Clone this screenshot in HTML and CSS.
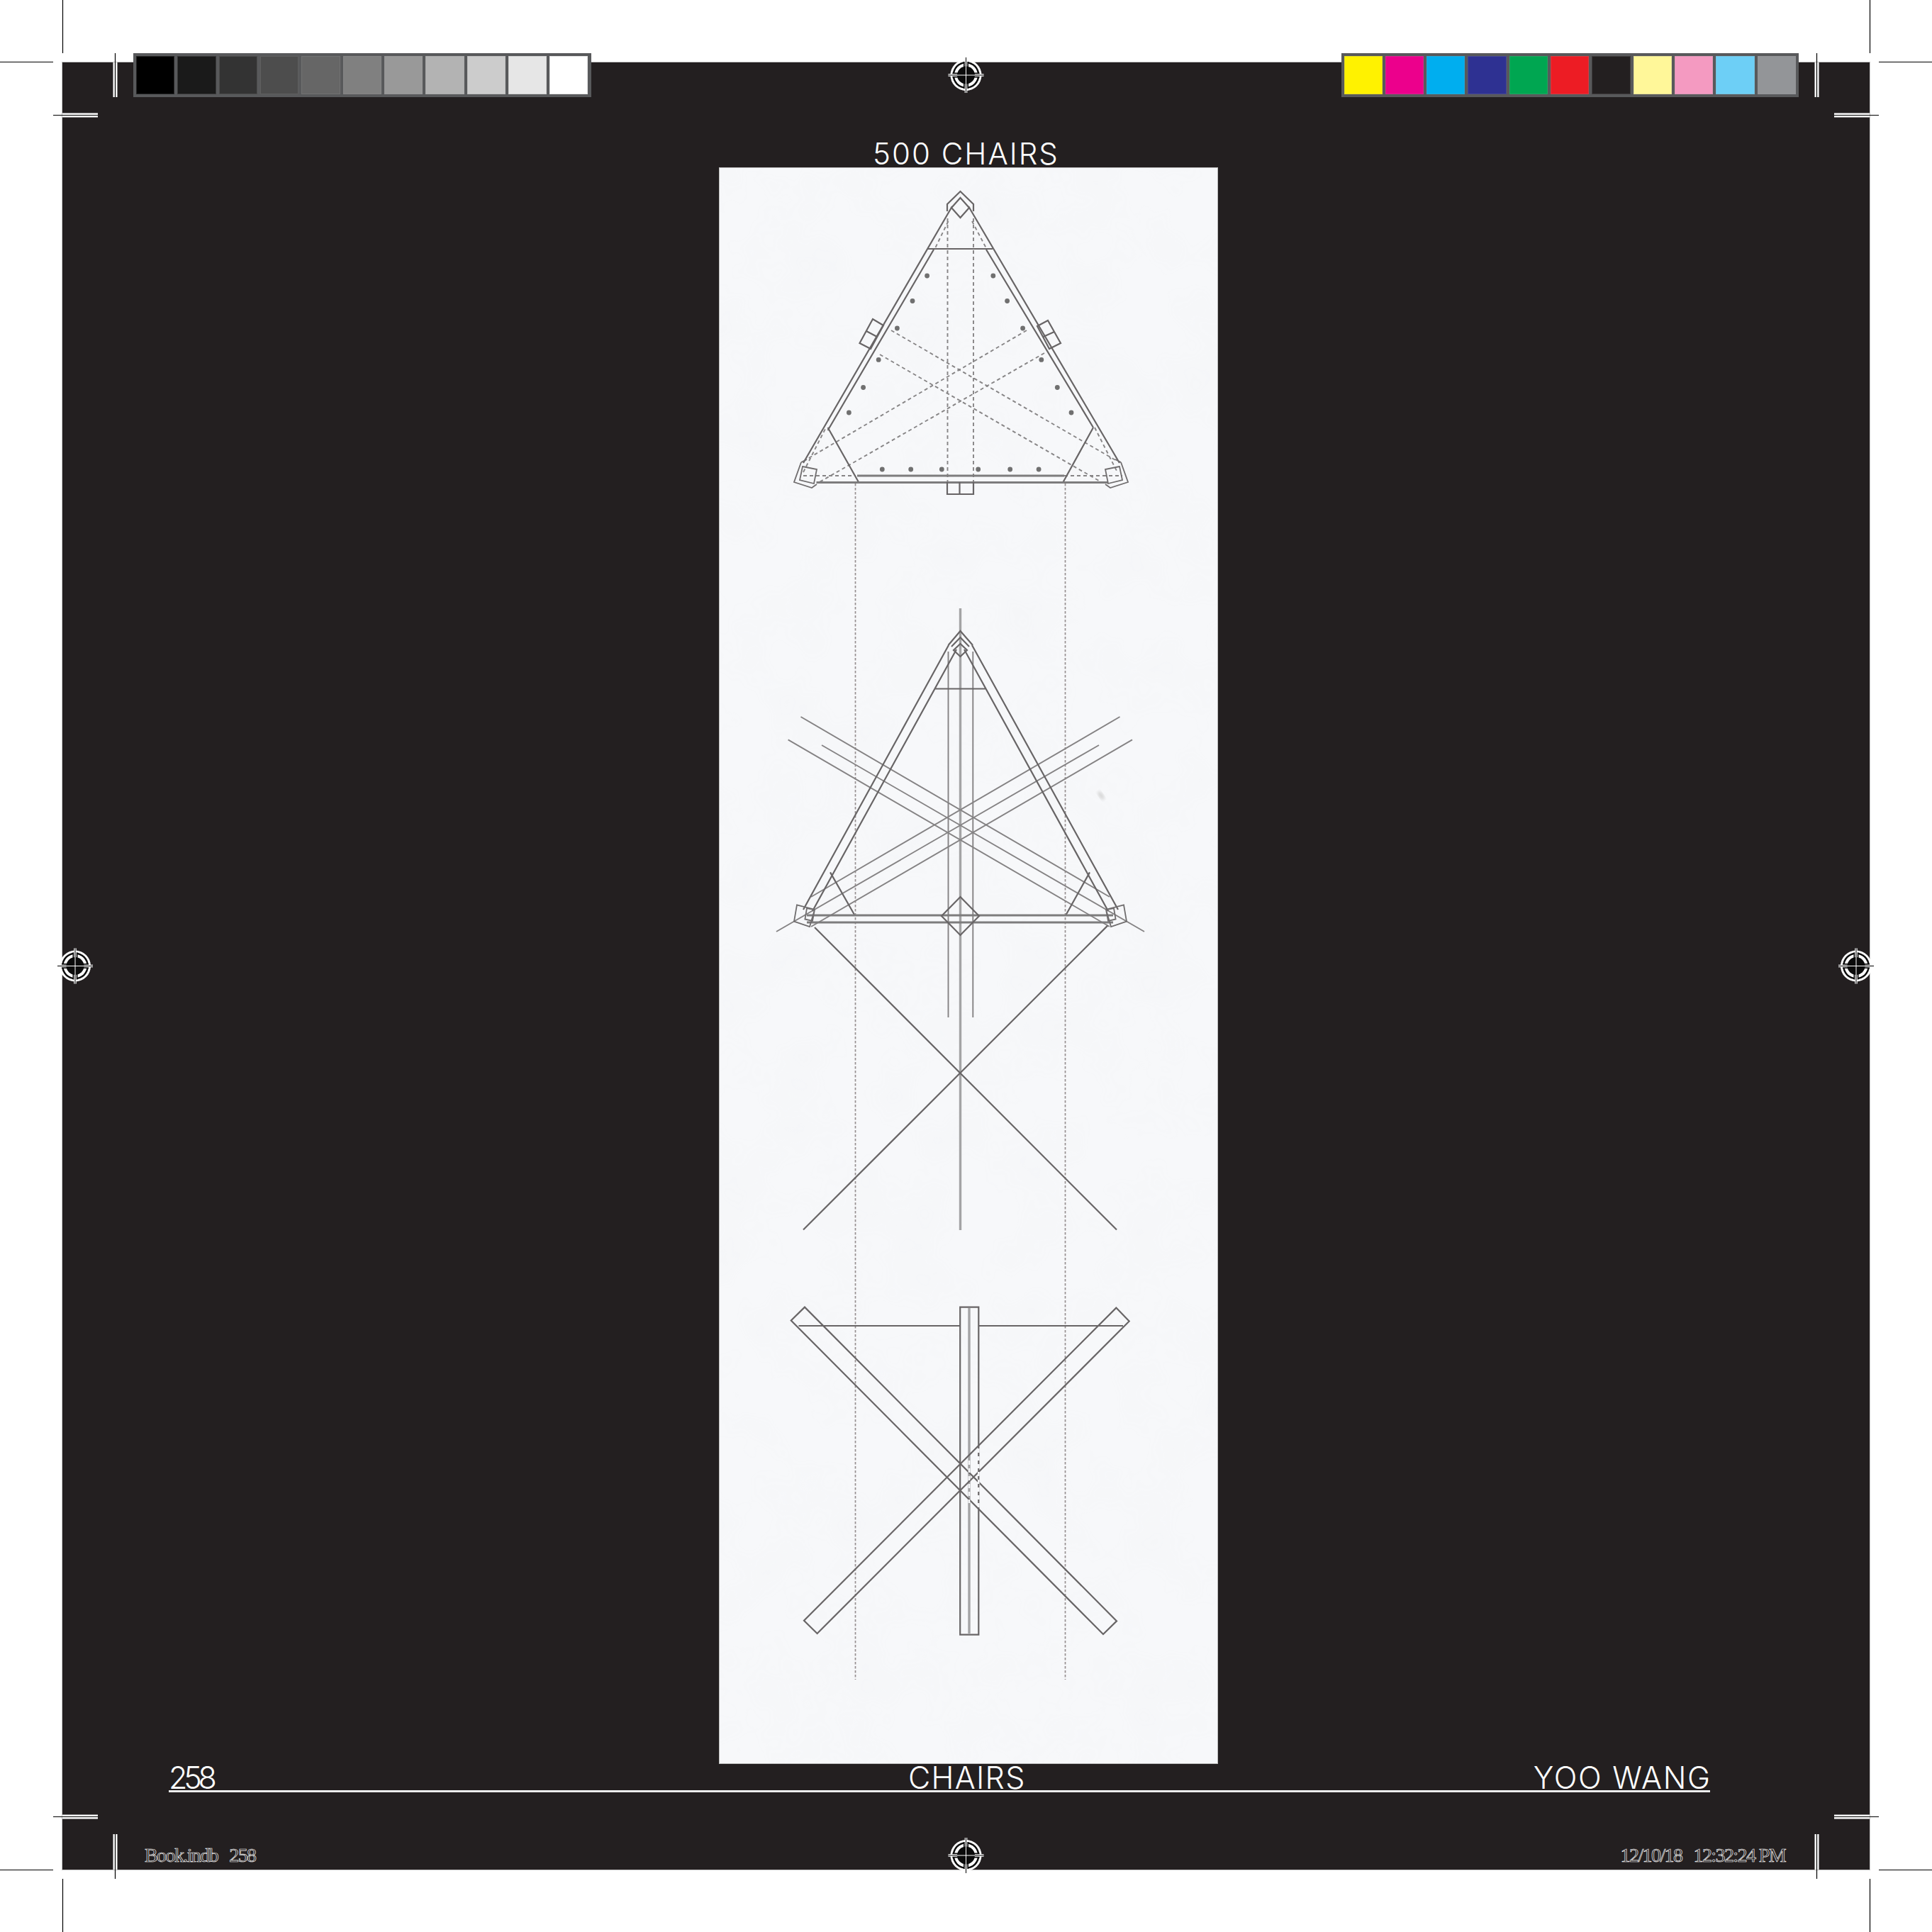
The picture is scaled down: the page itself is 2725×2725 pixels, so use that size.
FILE: index.html
```html
<!DOCTYPE html>
<html lang="en">
<head>
<meta charset="utf-8">
<title>500 Chairs – page 258</title>
<link rel="stylesheet" href="styles.css">
</head>
<body>
<div class="sheet">
  <main class="page">
    <div class="bars">
      <div class="bar">
        <i class="sw g0"></i><i class="sw g1"></i><i class="sw g2"></i><i class="sw g3"></i><i class="sw g4"></i><i class="sw g5"></i><i class="sw g6"></i><i class="sw g7"></i><i class="sw g8"></i><i class="sw g9"></i><i class="sw g10"></i>
      </div>
      <div class="bar">
        <i class="sw c0"></i><i class="sw c1"></i><i class="sw c2"></i><i class="sw c3"></i><i class="sw c4"></i><i class="sw c5"></i><i class="sw c6"></i><i class="sw c7"></i><i class="sw c8"></i><i class="sw c9"></i><i class="sw c10"></i>
      </div>
    </div>
    <h1 class="title">500 CHAIRS</h1>
    <figure class="plate">
      <svg class="drawing" viewBox="1015 237 702 2250" xmlns="http://www.w3.org/2000/svg">
        <defs>
          <filter id="paper" x="0" y="0" width="100%" height="100%">
            <feTurbulence type="fractalNoise" baseFrequency="0.012" numOctaves="3" seed="7"/>
            <feColorMatrix type="matrix" values="0 0 0 0 0.55  0 0 0 0 0.56  0 0 0 0 0.6  0.5 0 0 0 -0.2"/>
          </filter>
          <filter id="scan"><feGaussianBlur stdDeviation="0.45"/></filter>
          <filter id="spot"><feGaussianBlur stdDeviation="2"/></filter>
        </defs>
        <rect class="paper" x="1015" y="237" width="702" height="2250"/>
        <rect class="grain" x="1015" y="237" width="702" height="2250" filter="url(#paper)"/>
        <ellipse class="speck" cx="1553" cy="1122" rx="3" ry="7" transform="rotate(-35 1553 1122)" filter="url(#spot)"/>

        <g filter="url(#scan)">
          <!-- long construction lines -->
          <path class="dash-long" d="M1206.5 682V2369M1502.5 682V2369"/>

          <!-- top view -->
          <g>
            <path class="dash" d="M1336.5 308V680M1373 308V680M1337.5 312L1319 350M1371 312L1391 350M1257 466L1575 650M1241 500L1555 681M1448 466L1134 650M1473 498L1154 681M1133 671H1207M1501 671H1583M1133 666L1165 603M1544 603L1576 666"/>
            <path class="ln" d="M1336 298V288L1354.5 270L1373 288V298M1354.5 279L1367 293L1354.5 307L1342 293Z"/>
            <path class="ln" d="M1343 291L1133 653M1366 291L1579 653M1317 352L1167.6 607M1391 352L1542 603M1167.6 603L1211 680M1542 603L1499.5 680M1308.5 351H1400"/>
            <path class="ln-heavy" d="M1209 671H1501M1151.5 680.5H1562"/>
            <path class="ln" d="M1336 680V697H1373V680M1353.5 680V697"/>
            <path class="ln" d="M1231 450L1212.5 484L1228 492L1246 459ZM1222 467L1237 475M1478 452L1496 484L1480 492L1463 460ZM1487 468L1471.500 475"/>
            <path class="ln-thin" d="M1130 652L1120 680L1145 688L1152 683M1130 652L1138 648M1132 658L1152 662L1148 682L1128 677ZM1581 652L1591 680L1566 688L1559 683M1581 652L1573 648M1579 658L1559 662L1563 682L1583 677Z"/>
            <g class="dots">
              <circle cx="1307.6" cy="389" r="3.4"/><circle cx="1287" cy="424.5" r="3.4"/><circle cx="1265.4" cy="463" r="3.4"/><circle cx="1239.2" cy="507.4" r="3.4"/><circle cx="1217.6" cy="546.5" r="3.4"/><circle cx="1197.4" cy="582" r="3.4"/>
              <circle cx="1400.8" cy="389" r="3.4"/><circle cx="1420.6" cy="424.5" r="3.4"/><circle cx="1442.6" cy="463" r="3.4"/><circle cx="1468.8" cy="507.4" r="3.4"/><circle cx="1491.3" cy="546.5" r="3.4"/><circle cx="1511" cy="582" r="3.4"/>
              <circle cx="1244.3" cy="662" r="3.4"/><circle cx="1284.7" cy="662" r="3.4"/><circle cx="1328.3" cy="662" r="3.4"/><circle cx="1379.7" cy="662" r="3.4"/><circle cx="1424.7" cy="662" r="3.4"/><circle cx="1465.1" cy="662" r="3.4"/>
            </g>
          </g>

          <!-- front view -->
          <g>
            <path class="ln-center" d="M1354.5 858V1735"/>
            <path class="ln-soft" d="M1337.5 919V1435M1372.3 919V1435"/>
            <path class="ln-soft" d="M1129.5 1011L1565 1265M1159 1051L1614 1314M1111.6 1043.4L1565 1307M1579.5 1011L1144 1265M1550 1051L1095 1314M1597 1043.4L1144 1307"/>
            <path class="ln" d="M1337.5 910L1354.5 890L1372 910M1342 912L1354.5 899L1367 912M1354.5 908L1364 917L1354.5 926L1345 917Z"/>
            <path class="ln" d="M1338 910L1133 1283M1349 916L1146 1285M1371 910L1577 1283M1360 916L1563 1285M1319 971.5H1390M1171 1230.4L1205 1290M1537 1230.4L1503.7 1290"/>
            <path class="ln-heavy" d="M1138 1291H1570M1138 1301H1570"/>
            <path class="ln" d="M1354.5 1265L1381 1292L1354.5 1319L1328 1292Z"/>
            <path class="ln-thin" d="M1124 1276.4L1120 1299.6L1142 1307L1149 1283ZM1138 1281L1149 1283L1146 1299L1135.4 1296.5ZM1585 1276.4L1589 1299.6L1567 1307L1560 1283ZM1571 1281L1560 1283L1563 1299L1573.6 1296.5Z"/>
            <path class="ln" d="M1149 1308L1575 1734.5M1562.4 1305.4L1133 1734.5"/>
          </g>

          <!-- side view -->
          <g>
            <path class="ln-center" d="M1367 1845V2304"/>
            <path class="ln" d="M1126.5 1870H1354M1380 1870H1584"/>
            <path class="ln" d="M1135 1843.6L1115.8 1862.5L1556 2305L1575 2286.4ZM1574.3 1844.6L1592.7 1863.6L1152.6 2304L1134 2285.7Z"/>
            <path class="ln" d="M1354.2 1843.6H1380.3V2305.7H1354.2Z"/>
            <path class="knock" d="M1367 2060V2120M1380.3 2043V2128"/>
          </g>
        </g>
      </svg>
    </figure>
    <div class="folio">
      <span class="folio-left">258</span>
      <span class="folio-mid">CHAIRS</span>
      <span class="folio-right">YOO WANG</span>
    </div>
    <div class="slug">
      <span>Book.indb&nbsp;&nbsp;&nbsp;258</span>
      <span>12/10/18&nbsp;&nbsp;&nbsp;12:32:24 PM</span>
    </div>
  </main>

  <svg class="marks" viewBox="0 0 2725 2725" xmlns="http://www.w3.org/2000/svg">
    <defs>
      <g id="reg">
        <circle class="r-w" r="22"/>
        <circle class="r-k" r="19"/>
        <circle class="r-w" r="16.500"/>
        <path class="r-gap" d="M-19 0H19M0 -19V19"/>
        <path class="r-arm" d="M-25 0H25M0 -25V25"/>
        <circle class="r-k" r="12.500"/>
        <path class="r-hair-w" d="M-12.500 0H12.500M0 -12.500V12.500"/>
        <path class="r-hair-k" d="M-25 0H-12.500M12.500 0H25M0 -25V-12.500M0 12.500V25"/>
      </g>
    </defs>
    <path class="halo" d="M162.500 88V137M2562.500 88V137M162.500 2587V2637M2562.500 2587V2637M88 162.500H138M2587 162.500H2637M88 2562.500H138M2587 2562.500H2637"/>
    <path class="cut" d="M88.500 0V75M2637.500 0V75M88.500 2650V2725M2637.500 2650V2725M0 87.500H75M2650 87.500H2725M0 2637.500H75M2650 2637.500H2725"/>
    <path class="cut" d="M162.500 75V137M2562.500 75V137M162.500 2587V2650M2562.500 2587V2650M75 162.500H138M2587 162.500H2650M75 2562.500H138M2587 2562.500H2650"/>
    <use href="#reg" x="1362.500" y="106"/>
    <use href="#reg" x="1362.500" y="2617"/>
    <use href="#reg" x="106" y="1362.500"/>
    <use href="#reg" x="2618" y="1362.500"/>
  </svg>
</div>
</body>
</html>
```

FILE: styles.css
```css
* { box-sizing: border-box; }
html, body { margin: 0; padding: 0; background: #fff; }

.sheet {
  position: relative;
  width: 2725px;
  height: 2725px;
  padding: 88px;
  background: #fff;
}

.page {
  display: flex;
  flex-direction: column;
  width: 2549px;
  height: 2549px;
  background: #231f20;
  box-shadow: 0 0 0 1px #c6c6c6;
  color: #fff;
}

/* colour bars */
.bars {
  display: flex;
  justify-content: space-between;
  margin-top: -13px;
  padding: 0 100px;
}
.bar {
  display: flex;
  gap: 4px;
  width: 645.5px;
  height: 62px;
  padding: 4px;
  background: #58595b;
}
.sw { flex: 1; display: block; box-shadow: inset 0 0 0 1px rgba(150, 150, 150, .25); }
.g0 { background: #000; } .g1 { background: #1a1a1a; } .g2 { background: #333; }
.g3 { background: #4d4d4d; } .g4 { background: #666; } .g5 { background: #808080; }
.g6 { background: #999; } .g7 { background: #b3b3b3; } .g8 { background: #ccc; }
.g9 { background: #e6e6e6; } .g10 { background: #fff; }
.c0 { background: #fff200; } .c1 { background: #ec008c; } .c2 { background: #00aeef; }
.c3 { background: #2e3192; } .c4 { background: #00a651; } .c5 { background: #ed1c24; }
.c6 { background: #231f20; } .c7 { background: #fff799; } .c8 { background: #f49ac1; }
.c9 { background: #6dcff6; } .c10 { background: #939598; }

/* running head */
.title {
  display: flex;
  align-items: flex-end;
  justify-content: center;
  height: 100px;
  margin: 0;
  font: 300 42px/40px Inter, "Liberation Sans", sans-serif;
  letter-spacing: 2px;
  color: #fff;
}

/* drawing plate */
.plate {
  width: 702px;
  height: 2250px;
  margin: 0 0 0 926.5px;
  box-shadow: 0 0 0 1px #bdbdbd;
}
.drawing { display: block; width: 702px; height: 2250px; }
.paper { fill: #f7f8fa; }
.grain { opacity: .14; }
.speck { fill: #d4d4d4; }

.ln, .ln-heavy, .ln-thin, .ln-soft, .ln-center, .dash, .dash-long, .knock { fill: none; }
.ln { stroke: #686566; stroke-width: 2.2; }
.ln-heavy { stroke: #7d7c7d; stroke-width: 3; }
.ln-thin { stroke: #6f6d6e; stroke-width: 1.8; }
.ln-soft { stroke: #858384; stroke-width: 1.9; }
.ln-center { stroke: #a4a4a5; stroke-width: 3.4; }
.dash { stroke: #878586; stroke-width: 1.9; stroke-dasharray: 5 4; }
.dash-long { stroke: #968f90; stroke-width: 1.7; stroke-dasharray: 3.5 2.5; }
.knock { stroke: #f7f8fa; stroke-width: 2.6; stroke-dasharray: 6 5; }
.dots { fill: #707070; }

/* folio line */
.folio {
  display: grid;
  grid-template-columns: 1043px auto 1fr;
  align-items: end;
  height: 41px;
  margin: 0 225px 0 150px;
  border-bottom: 3px solid #ececec;
  font: 300 43px/40px Inter, "Liberation Sans", sans-serif;
  color: #fff;
}
.folio-left { letter-spacing: -5.2px; }
.folio-mid { letter-spacing: 1.3px; }
.folio-right { text-align: right; letter-spacing: 1.7px; margin-right: -1.7px; }

/* printer's slug */
.slug {
  display: flex;
  justify-content: space-between;
  margin-top: 75px;
  padding: 0 119px 0 116px;
  font: 400 28px/28px "Liberation Serif", serif;
  letter-spacing: -1.6px;
  color: #231f20;
  -webkit-text-stroke: .7px #f0f0f0;
}

/* crop marks and registration targets */
.marks {
  position: absolute;
  left: 0;
  top: 0;
  width: 2725px;
  height: 2725px;
  pointer-events: none;
}
.cut { fill: none; stroke: #000; stroke-width: 1.2; }
.halo { fill: none; stroke: #fff; stroke-width: 6; }
.r-w { fill: #fff; }
.r-k { fill: #0b0b0b; }
.r-gap { fill: none; stroke: #0b0b0b; stroke-width: 7; }
.r-arm { fill: none; stroke: #fff; stroke-width: 3.5; }
.r-hair-w { fill: none; stroke: #fff; stroke-width: 1; }
.r-hair-k { fill: none; stroke: #000; stroke-width: 1; }
```
